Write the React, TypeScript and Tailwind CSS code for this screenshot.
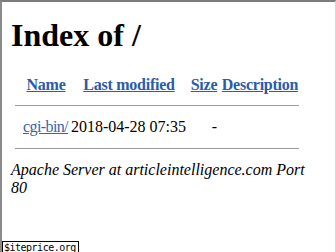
const serif = "font-['Liberation_Serif','Times_New_Roman',serif]";

const link = "text-[#2b5ca6] underline";

function HrRow({ top, bottom }: { top: string; bottom: string }) {
  return (
    <tr>
      <td colSpan={5} className={`p-0 ${top} ${bottom}`}>
        <div className="h-px bg-[#9c9c9c]" />
      </td>
    </tr>
  );
}

export default function App() {
  return (
    <div className={`relative h-[252px] w-[336px] overflow-hidden border-t-2 border-l-2 border-r border-t-[#7c7c7c] border-l-[#8a8a8a] border-r-[#d8d8d8] bg-white pl-[9px] text-black ${serif}`}>
      <h1 className="mt-[15px] text-[32px] leading-[36px] font-bold">Index of /</h1>

      <table className="mt-[23px] ml-[4px] w-[284px] table-fixed border-collapse text-[16px] leading-[18px]">
        <colgroup>
          <col className="w-[7px]" />
          <col className="w-[48px]" />
          <col className="w-[118px]" />
          <col className="w-[32px]" />
          <col className="w-[79px]" />
        </colgroup>
        <tbody>
          <tr className="font-bold tracking-[-0.25px]">
            <th className="p-0" />
            <th className="p-0 text-center whitespace-nowrap">
              <a className={link}>Name</a>
            </th>
            <th className="p-0 text-center whitespace-nowrap">
              <a className={link}>Last modified</a>
            </th>
            <th className="p-0 text-center whitespace-nowrap">
              <a className={link}>Size</a>
            </th>
            <th className="p-0 pl-px text-center whitespace-nowrap">
              <a className={link}>Description</a>
            </th>
          </tr>
          <HrRow top="pt-[11px]" bottom="pb-[12px]" />
          <tr>
            <td className="p-0" />
            <td className="p-0 pl-px whitespace-nowrap tracking-[-0.6px]">
              <a className="text-[#3466ab] underline">cgi-bin/</a>
            </td>
            <td className="p-0 pr-[2px] text-right whitespace-nowrap">2018-04-28 07:35</td>
            <td className="p-0 pr-[3px] text-right">-</td>
            <td className="p-0" />
          </tr>
          <HrRow top="pt-[12px]" bottom="pb-0" />
        </tbody>
      </table>

      <address className="mt-[12px] w-[305px] text-[16px] leading-[18px] italic">
        Apache Server at articleintelligence.com Port 80
      </address>

      <div className="absolute left-0 top-[239px] h-[14px] w-[77px] border border-black bg-white pl-px font-['DejaVu_Sans_Mono',monospace] text-[10px] leading-[11px] tracking-[-0.5px] text-black">
        $iteprice.org
      </div>
    </div>
  );
}
